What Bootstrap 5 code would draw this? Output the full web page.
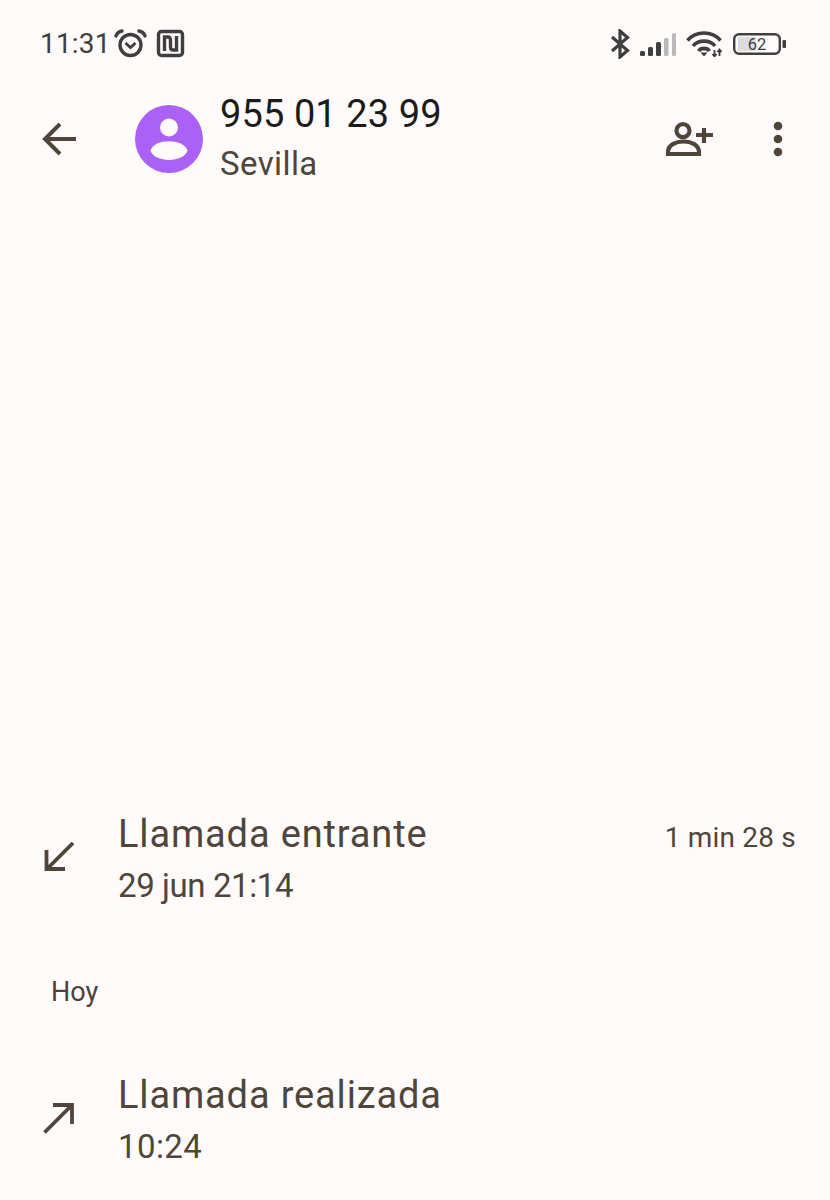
<!DOCTYPE html>
<html lang="es">
<head>
    <meta charset="UTF-8">
    <meta name="viewport" content="width=device-width, initial-scale=1.0">
    <link href="https://cdn.jsdelivr.net/npm/bootstrap@5.3.2/dist/css/bootstrap.min.css" rel="stylesheet">
    <title>Detalle de llamada</title>
    <style>
        body {
            background-color: #fffbfa;
            color: #4f453b;
            font-family: "Roboto", "Noto Sans", sans-serif;
            height: 1200px;
            overflow: hidden;
        }
        .status-bar {
            height: 88px;
            padding: 0 44px 0 40px;
            color: #3f3f3f;
        }
        .status-time {
            font-size: 28px;
            letter-spacing: 0.2px;
            line-height: 1;
        }
        .status-right { column-gap: 10px; }
        .top-bar {
            height: 102px;
            padding: 0 46px 0 42px;
        }
        .back-slot { width: 93px; }
        .avatar-circle {
            width: 68px;
            height: 68px;
            border-radius: 50%;
            background-color: #ab60f6;
            margin-right: 17px;
        }
        .contact-name {
            font-size: 38px;
            line-height: 50px;
            color: #1c1b1a;
            letter-spacing: 0.1px;
        }
        .contact-place {
            font-size: 33px;
            line-height: 50px;
            letter-spacing: 0.4px;
        }
        .more-icon { margin-left: 58px; }
        .spacer-area { height: 619px; }
        .call-row {
            height: 102px;
            padding-left: 42px;
            padding-right: 34px;
        }
        .call-icon { width: 77px; }
        .call-title {
            font-size: 38px;
            line-height: 51px;
            letter-spacing: 0.85px;
            margin-left: -1px;
        }
        .call-sub {
            font-size: 33px;
            line-height: 51px;
            letter-spacing: -0.4px;
            margin-left: -1px;
        }
        .call-sub-time { letter-spacing: 0.4px; }
        .call-length {
            font-size: 28px;
            line-height: 1;
            letter-spacing: 0.2px;
            margin-bottom: 44px;
        }
        .day-label {
            font-size: 27px;
            line-height: 34px;
            padding-left: 51px;
            margin-top: 64px;
            margin-bottom: 61px;
            color: #4b4239;
        }
    </style>
</head>
<body>

<div class="status-bar d-flex align-items-center justify-content-between">
    <div class="d-flex align-items-center">
        <span class="status-time">11:31</span>
        <svg width="36" height="30" viewBox="0 0 36 30" fill="none" stroke="#3f3f3f" stroke-width="3.4">
            <circle cx="19.500" cy="16" r="10.500"/>
            <path d="M14.500 14l5 4.500 5-4.500" stroke-width="3"/>
            <path d="M5 7C6 4 8 2.500 11 2M34 7C33 4 31 2.500 28 2" stroke-linecap="round"/>
        </svg>
        <svg class="ms-2" width="30" height="30" viewBox="0 0 30 30" fill="none" stroke="#3f3f3f" stroke-width="3.4">
            <rect x="3.500" y="2.500" width="24" height="24" rx="3"/>
            <path d="M9.500 22V8H13C15.500 8 15.500 10 15.500 12V17M21.500 7V21H18C15.500 21 15.500 19 15.500 17V12"/>
        </svg>
    </div>
    <div class="status-right d-flex align-items-center">
        <svg width="20" height="30" viewBox="0 0 20 30" fill="none" stroke="#3f3f3f" stroke-width="3.2">
            <path d="M2 8L17.500 21.500L10 28V2L17.500 8.500L2 22"/>
        </svg>
        <svg width="36" height="23" viewBox="0 0 36 23">
            <rect x="0" y="18" width="5" height="5" rx="1.500" fill="#3f3f3f"/>
            <rect x="8" y="14" width="5" height="9" rx="1.500" fill="#3f3f3f"/>
            <rect x="16" y="9" width="5" height="14" rx="1.500" fill="#3f3f3f"/>
            <rect x="24" y="5" width="4.500" height="18" rx="1.500" fill="#b9b9b9"/>
            <rect x="32" y="0" width="4" height="23" rx="1.500" fill="#b9b9b9"/>
        </svg>
        <svg width="37" height="26" viewBox="0 0 37 26" fill="none" stroke="#3f3f3f" stroke-width="3.6">
            <path d="M1.500 9.500C10 -0.500 26 -0.500 34.500 9.500"/>
            <path d="M7 15C12 8.500 24 8.500 29 15"/>
            <path d="M12.500 20C15 16.500 21 16.500 23.500 20"/>
            <path d="M14.500 21.500h7l-3.500 4z" fill="#3f3f3f" stroke="none"/>
            <path d="M28.500 19v6M26.500 23l2 2.500 2-2.500M33.500 25v-6M31.500 21l2-2.500 2 2.500" stroke-width="1.800"/>
        </svg>
        <svg width="53" height="22" viewBox="0 0 53 22" fill="none">
            <rect x="5" y="4" width="18" height="14" fill="#dcdcdc"/>
            <rect x="1.200" y="1.200" width="45.600" height="19.600" rx="5" stroke="#3f3f3f" stroke-width="2.400"/>
            <rect x="49.500" y="7" width="3.500" height="8" rx="1" fill="#3f3f3f"/>
            <text x="24" y="17" text-anchor="middle" font-family="Roboto, sans-serif" font-size="16.500" fill="#3f3f3f">62</text>
        </svg>
    </div>
</div>

<div class="top-bar d-flex align-items-center">
    <div class="back-slot">
        <svg class="d-block" width="36" height="34" viewBox="0 0 36 34" fill="none" stroke="#4f453b" stroke-width="4">
            <path d="M34 17H3M18 2L3 17L18 32"/>
        </svg>
    </div>
    <div class="avatar-circle d-flex align-items-center justify-content-center flex-shrink-0">
        <svg width="68" height="68" viewBox="0 0 68 68" fill="#fffbfa">
            <circle cx="34" cy="22.500" r="9"/>
            <path d="M15.500 45.500C19 33 49 33 52.500 45.500C49 58 19 58 15.500 45.500Z"/>
        </svg>
    </div>
    <div class="flex-grow-1">
        <div class="contact-name">955 01 23 99</div>
        <div class="contact-place">Sevilla</div>
    </div>
    <svg width="48" height="36" viewBox="0 0 48 36" fill="none" stroke="#4f453b" stroke-width="4.200">
        <circle cx="17" cy="9.700" r="6.500"/>
        <path d="M2 33V31C2 17 33 17 33 31V33Z"/>
        <path d="M30 14H47M38 7V22"/>
    </svg>
    <svg class="more-icon" width="12" height="36" viewBox="0 0 12 36" fill="#4f453b">
        <circle cx="6" cy="5" r="4.300"/>
        <circle cx="6" cy="18" r="4.300"/>
        <circle cx="6" cy="31" r="4.300"/>
    </svg>
</div>

<div class="spacer-area"></div>

<div class="call-row d-flex align-items-center">
    <div class="call-icon">
        <svg class="d-block" width="36" height="36" viewBox="0 0 36 36" fill="none" stroke="#4f453b" stroke-width="3.800">
            <path d="M31 1L5 27M4.500 8V27H23"/>
        </svg>
    </div>
    <div class="flex-grow-1">
        <div class="call-title">Llamada entrante</div>
        <div class="call-sub">29 jun 21:14</div>
    </div>
    <div class="call-length">1 min 28 s</div>
</div>

<div class="day-label">Hoy</div>

<div class="call-row d-flex align-items-center">
    <div class="call-icon">
        <svg class="d-block" width="36" height="36" viewBox="0 0 36 36" fill="none" stroke="#4f453b" stroke-width="3.800">
            <path d="M2.500 29.500L29 3M11 2H30V21"/>
        </svg>
    </div>
    <div class="flex-grow-1">
        <div class="call-title">Llamada realizada</div>
        <div class="call-sub call-sub-time">10:24</div>
    </div>
</div>

<script src="https://cdn.jsdelivr.net/npm/bootstrap@5.3.2/dist/js/bootstrap.bundle.min.js"></script>
</body>
</html>
